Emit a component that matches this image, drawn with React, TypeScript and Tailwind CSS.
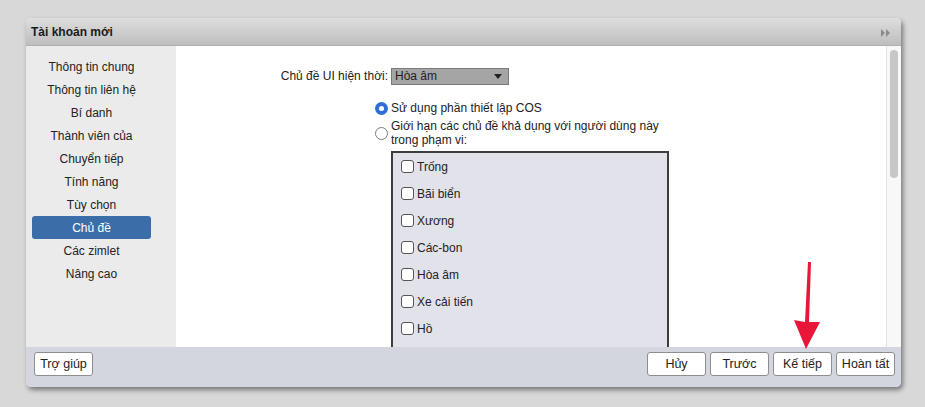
const navItems = [
  "Thông tin chung",
  "Thông tin liên hệ",
  "Bí danh",
  "Thành viên của",
  "Chuyển tiếp",
  "Tính năng",
  "Tùy chọn",
  "Chủ đề",
  "Các zimlet",
  "Nâng cao",
]

const themes = ["Trống", "Bãi biển", "Xương", "Các-bon", "Hòa âm", "Xe cải tiến", "Hồ"]

function Btn({ label }: { label: string }) {
  return (
    <button className="w-[59px] h-[24px] rounded-[3px] border border-[#8e8e8e] bg-white text-[12.5px] text-[#222] flex items-center justify-center">
      {label}
    </button>
  )
}

export default function App() {
  return (
    <div
      className="w-[925px] h-[407px] bg-[#d8d8d8] pt-[18px] pl-[26px] text-[12px] text-[#222] relative overflow-hidden"
      style={{ fontFamily: '"Liberation Sans", Arial, sans-serif' }}
    >
      <div className="w-[875px] h-[369px] rounded-[5px] overflow-hidden flex flex-col bg-white shadow-[2px_3px_5px_rgba(0,0,0,0.45)]">
        {/* title bar */}
        <div className="h-[28px] shrink-0 flex items-center justify-between pl-[5px] pr-[10px] bg-gradient-to-b from-[#dedede] to-[#bebebe] border-b border-[#b0b0b0]">
          <span className="font-bold text-[12px] text-[#1a1a1a]">Tài khoản mới</span>
          <svg width="10" height="8" viewBox="0 0 10 8" className="mt-[2px]">
            <polygon points="0,0 4,4 0,8" fill="#8a8a8a" />
            <polygon points="5,0 9,4 5,8" fill="#8a8a8a" />
          </svg>
        </div>

        {/* body */}
        <div className="flex h-[301px] shrink-0">
          <div className="w-[150px] shrink-0 bg-[#ebebeb] pt-[9px] pl-[6px]">
            {navItems.map((item) => (
              <div
                key={item}
                className={
                  item === "Chủ đề"
                    ? "w-[119px] h-[23px] flex items-center justify-center rounded-[3px] bg-[#3b6ea8] text-white"
                    : "w-[119px] h-[23px] flex items-center justify-center"
                }
              >
                {item}
              </div>
            ))}
          </div>

          <div className="flex-1 overflow-hidden pt-[21px]">
            <div className="flex items-center">
              <div className="w-[212px] text-right">Chủ đề UI hiện thời:</div>
              <div className="ml-[3px] w-[118px] h-[17px] border border-[#7a7a7a] bg-[#a5a5a5] flex items-center justify-between pl-[3px] pr-[6px]">
                <span className="text-[#1e1e1e]">Hòa âm</span>
                <svg width="8" height="5" viewBox="0 0 8 5">
                  <polygon points="0,0 8,0 4,5" fill="#222" />
                </svg>
              </div>
            </div>

            <div className="mt-[14px] ml-[199px] flex items-center">
              <span className="w-[13px] h-[13px] rounded-full bg-[#2f6fd6] flex items-center justify-center">
                <span className="w-[5px] h-[5px] rounded-full bg-white" />
              </span>
              <span className="ml-[3px]">Sử dụng phần thiết lập COS</span>
            </div>

            <div className="mt-[2px] ml-[199px] flex items-center">
              <span className="w-[13px] h-[13px] rounded-full border border-[#7c7c7c] bg-white shrink-0" />
              <span className="ml-[3px] leading-[14px]">
                Giới hạn các chủ đề khả dụng với người dùng này
                <br />
                trong phạm vi:
              </span>
            </div>

            <div className="mt-[4px] ml-[215px] w-[278px] h-[240px] border-2 border-[#3d3d3d] bg-[#e1e2ea]">
              {themes.map((t) => (
                <div key={t} className="h-[27px] flex items-center pl-[8px]">
                  <span className="w-[13px] h-[13px] rounded-[3px] border border-[#555] bg-white" />
                  <span className="ml-[3px]">{t}</span>
                </div>
              ))}
            </div>
          </div>

          <div className="w-[15px] shrink-0 bg-[#f8f8f8] border-l border-[#e2e2e2] pt-[4px] pl-[3px]">
            <div className="w-[8px] h-[128px] rounded-full bg-[#c7c7c7]" />
          </div>
        </div>

        {/* footer */}
        <div className="h-[40px] shrink-0 bg-[#d3d6de] flex items-start justify-between pt-[5px] pl-[8px] pr-[6px]">
          <Btn label="Trợ giúp" />
          <div className="flex gap-[4px]">
            <Btn label="Hủy" />
            <Btn label="Trước" />
            <Btn label="Kế tiếp" />
            <Btn label="Hoàn tất" />
          </div>
        </div>
      </div>

      {/* annotation arrow */}
      <svg className="absolute left-[790px] top-[260px]" width="35" height="92" viewBox="0 0 35 92">
        <polygon points="18,2 21,2 19,62 30,62 16,89 4,60 15,62" fill="#e8173a" />
      </svg>
    </div>
  )
}
